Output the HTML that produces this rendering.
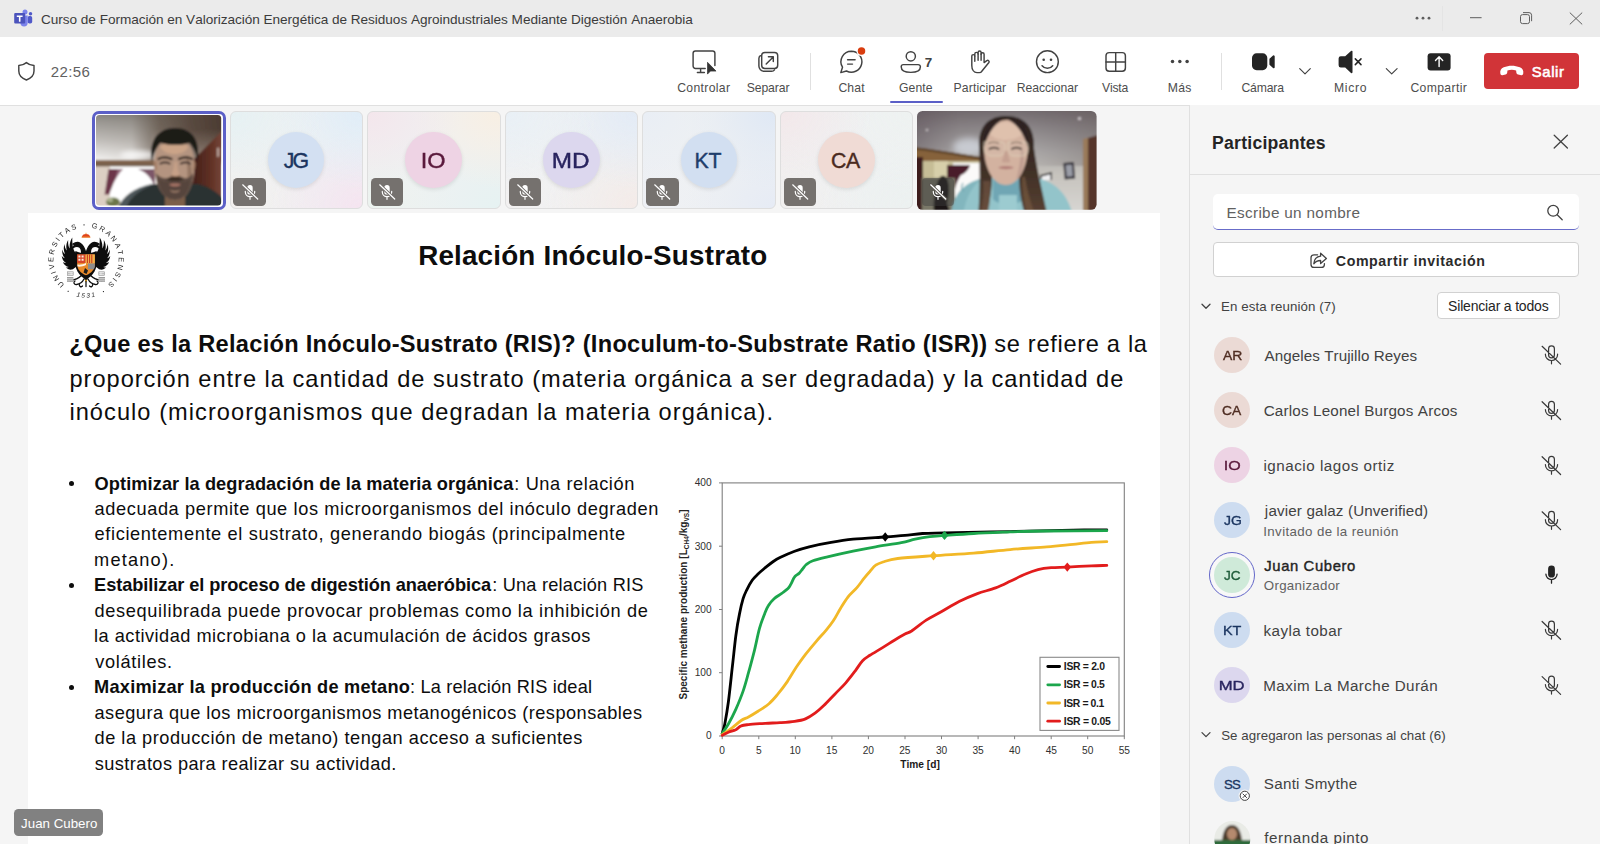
<!DOCTYPE html>
<html lang="es"><head><meta charset="utf-8"><title>Curso de Formación</title><style>
html,body{margin:0;padding:0;}
body{width:1600px;height:844px;overflow:hidden;background:#f5f5f5;position:relative;font-family:"Liberation Sans",sans-serif;font-kerning:none;}
.b{position:absolute;box-sizing:border-box;display:block;}
.t{position:absolute;white-space:pre;line-height:1em;display:block;}
svg{overflow:visible;}
svg text{font-family:"Liberation Sans",sans-serif;}
</style></head><body>
<div class="b" style="left:0px;top:0px;width:1600px;height:37px;background:#ebebeb;"></div>
<div class="b" style="left:0px;top:37px;width:1600px;height:69px;background:#fff;border-bottom:1px solid #e0e0e0;"></div>
<span class="t" style="left:41.01px;top:13.00px;font-size:13.6px;color:#3b3b3b;letter-spacing:-0.032px;">Curso de Formación en Valorización Energética de Residuos Agroindustriales Mediante Digestión Anaerobia</span>
<span class="t" style="left:50.75px;top:64.00px;font-size:15px;color:#616161;letter-spacing:0.369px;">22:56</span>
<span class="t" style="left:677.18px;top:82.00px;font-size:12.2px;color:#4d4d4d;letter-spacing:0.331px;">Controlar</span>
<span class="t" style="left:746.65px;top:82.00px;font-size:12.2px;color:#4d4d4d;letter-spacing:-0.074px;">Separar</span>
<span class="t" style="left:838.38px;top:82.00px;font-size:12.2px;color:#4d4d4d;letter-spacing:0.146px;">Chat</span>
<span class="t" style="left:899.09px;top:82.00px;font-size:12.2px;color:#4d4d4d;letter-spacing:0.055px;">Gente</span>
<span class="t" style="left:953.60px;top:82.00px;font-size:12.2px;color:#4d4d4d;letter-spacing:0.119px;">Participar</span>
<span class="t" style="left:1016.80px;top:82.00px;font-size:12.2px;color:#4d4d4d;letter-spacing:-0.056px;">Reaccionar</span>
<span class="t" style="left:1101.95px;top:82.00px;font-size:12.2px;color:#4d4d4d;letter-spacing:-0.167px;">Vista</span>
<span class="t" style="left:1167.80px;top:82.00px;font-size:12.2px;color:#4d4d4d;letter-spacing:0.297px;">Más</span>
<span class="t" style="left:1241.38px;top:82.00px;font-size:12.2px;color:#4d4d4d;letter-spacing:-0.154px;">Cámara</span>
<span class="t" style="left:1334.00px;top:82.00px;font-size:12.2px;color:#4d4d4d;letter-spacing:0.673px;">Micro</span>
<span class="t" style="left:1410.38px;top:82.00px;font-size:12.2px;color:#4d4d4d;letter-spacing:0.371px;">Compartir</span>
<span class="t" style="left:924.82px;top:56.00px;font-size:13.4px;color:#424242;font-weight:700;">7</span>
<div class="b" style="left:890.4px;top:100.8px;width:52.5px;height:2.4px;background:#5b5fc7;border-radius:1.2px;"></div>
<div class="b" style="left:810px;top:53px;width:1px;height:37px;background:#e0e0e0;"></div>
<div class="b" style="left:1221px;top:53px;width:1px;height:37px;background:#e0e0e0;"></div>
<div class="b" style="left:1442px;top:6px;width:1px;height:25px;background:#e4e4e4;"></div>
<div class="b" style="left:1484px;top:52.5px;width:95px;height:36.5px;background:#d13438;border-radius:4px;"></div>
<span class="t" style="left:1531.83px;top:65.00px;font-size:14.8px;color:#fff;letter-spacing:0.628px;-webkit-text-stroke:0.600px #fff;">Salir</span>
<svg class="b" style="left:0;top:0" width="1600" height="110" viewBox="0 0 1600 110"><g><circle cx="30.500" cy="13.700" r="1.750" fill="#5059c9"/><rect x="27.600" y="16" width="4.600" height="7.600" rx="1.800" fill="#5059c9"/><circle cx="25" cy="12.100" r="2.500" fill="#7b83eb"/><path d="M20.400 15.600h7.300v7.200a3.650 3.650 0 0 1-7.300 0z" fill="#7b83eb"/><rect x="14.200" y="13" width="11" height="10.600" rx="1.100" fill="#4b53bc"/><path d="M16.800 15.600h5.800v1.400h-2.100v4.700h-1.600v-4.700h-2.100z" fill="#fff"/></g><path d="M26.4 62.6c2.2 1.9 4.6 2.7 7.6 2.9v5.6c0 4.4-2.9 7.2-7.6 8.9-4.7-1.7-7.6-4.5-7.6-8.9v-5.6c3-.2 5.4-1 7.6-2.9z" fill="none" stroke="#424242" stroke-width="1.45" stroke-linecap="round" stroke-linejoin="round"/><g fill="#5e5e5e"><circle cx="1417" cy="18.200" r="1.400"/><circle cx="1423" cy="18.200" r="1.400"/><circle cx="1429" cy="18.200" r="1.400"/></g><path d="M1470 17.700h11.600" stroke="#5e5e5e" stroke-width="1" fill="none"/><rect x="1520.500" y="14.600" width="9" height="9" rx="2" fill="none" stroke="#5e5e5e" stroke-width="1"/><path d="M1523 12.600h6a2.600 2.600 0 0 1 2.600 2.600v6" fill="none" stroke="#5e5e5e" stroke-width="1"/><path d="M1569.800 12.600l12.400 11.800M1582.200 12.600l-12.400 11.800" stroke="#5e5e5e" stroke-width="1" fill="none"/><path d="M705.200 68.400H695.400a2.300 2.300 0 0 1-2.300-2.300V53.200a2.300 2.300 0 0 1 2.300-2.300h17.200a2.300 2.300 0 0 1 2.300 2.300v12.400M700.600 68.600v3.800M697.400 72.500h7" fill="none" stroke="#424242" stroke-width="1.45" stroke-linecap="round" stroke-linejoin="round"/><path d="M707.500 62.300v11.800l3-3h5.500z" fill="#333" stroke="#333" stroke-width="0.700" stroke-linejoin="round"/><rect x="761.700" y="52.400" width="16" height="16" rx="3.200" fill="none" stroke="#424242" stroke-width="1.45" stroke-linecap="round" stroke-linejoin="round"/><path d="M760.400 55.700a3.600 3.600 0 0 0-1.500 3v7.400a5.200 5.200 0 0 0 5.200 5.200h7.400a3.600 3.600 0 0 0 3-1.500" fill="none" stroke="#424242" stroke-width="1.45" stroke-linecap="round" stroke-linejoin="round"/><path d="M766.200 64l7-7M768.400 56.700h4.900v4.900" fill="none" stroke="#424242" stroke-width="1.45" stroke-linecap="round" stroke-linejoin="round"/><path d="M851.400 51.200a10.500 10.500 0 1 1-4.900 19.800l-5.700 1.600 1.700-5.400a10.500 10.500 0 0 1 8.900-16z" fill="none" stroke="#424242" stroke-width="1.45" stroke-linecap="round" stroke-linejoin="round"/><path d="M847.600 59.800h7.500M847.600 64.100h4.900" fill="none" stroke="#424242" stroke-width="1.45" stroke-linecap="round" stroke-linejoin="round"/><circle cx="861.500" cy="51.100" r="5" fill="#fff"/><circle cx="861.500" cy="51.100" r="3.750" fill="#d93d0f"/><circle cx="910.8" cy="56.3" r="4.6" fill="none" stroke="#424242" stroke-width="1.45" stroke-linecap="round" stroke-linejoin="round"/><path d="M903.4 64.6h14.8a2.2 2.2 0 0 1 2.2 2.2c0 3.6-3.8 5.6-9.6 5.6s-9.6-2-9.6-5.6a2.2 2.2 0 0 1 2.2-2.2z" fill="none" stroke="#424242" stroke-width="1.45" stroke-linecap="round" stroke-linejoin="round"/><path d="M971.800 65.500V56.100a1.500 1.500 0 0 1 3 0V54a1.650 1.650 0 0 1 3.300 0V52.500a1.500 1.500 0 0 1 3 0V54.200a1.500 1.500 0 0 1 3 0V62.600l2.700-1.900a1.400 1.400 0 0 1 2.100 1.800L981.800 71.300c-.6.900-1.400 1.300-2.400 1.300h-2.400c-3 0-5.200-2.800-5.200-7.100z" fill="none" stroke="#424242" stroke-width="1.45" stroke-linecap="round" stroke-linejoin="round"/><path d="M974.800 56.100V61.200M978.100 54V60.200M981.100 54V60.200" fill="none" stroke="#424242" stroke-width="1.45" stroke-linecap="round" stroke-linejoin="round"/><circle cx="1047.400" cy="61.700" r="10.900" fill="none" stroke="#424242" stroke-width="1.45" stroke-linecap="round" stroke-linejoin="round"/><circle cx="1043.700" cy="59.700" r="1.300" fill="#424242"/><circle cx="1051" cy="59.700" r="1.300" fill="#424242"/><path d="M1042.100 65.700c1.300 1.700 3.100 2.500 5.300 2.500s4-.8 5.300-2.500" fill="none" stroke="#424242" stroke-width="1.45" stroke-linecap="round" stroke-linejoin="round"/><rect x="1106" y="52.6" width="19.4" height="18.600" rx="3.200" fill="none" stroke="#424242" stroke-width="1.45" stroke-linecap="round" stroke-linejoin="round"/><path d="M1115.700 52.600v18.600M1106 61.900h19.400" fill="none" stroke="#424242" stroke-width="1.45" stroke-linecap="round" stroke-linejoin="round"/><g fill="#424242"><circle cx="1172.500" cy="61.600" r="1.750"/><circle cx="1179.800" cy="61.600" r="1.750"/><circle cx="1187.100" cy="61.600" r="1.750"/></g><rect x="1252" y="53.300" width="15.300" height="16.900" rx="4.600" fill="#242424"/><path d="M1270.400 59.300l3.300-3v11l-3.300-3z" fill="#242424" stroke="#242424" stroke-width="2" stroke-linejoin="round"/><path d="M1299.700 68.700l5.300 5.200 5.300-5.200M1386.300 68.700l5.400 5.200 5.400-5.200" fill="none" stroke="#424242" stroke-width="1.150" stroke-linecap="round" stroke-linejoin="round"/><path d="M1352.500 51.600v20.600a.9.900 0 0 1-1.500.7l-5.800-5.400h-4.400a2.200 2.200 0 0 1-2.200-2.200v-6.800a2.200 2.200 0 0 1 2.200-2.200h4.400l5.800-5.400a.9.900 0 0 1 1.500.7z" fill="#242424"/><path d="M1355.300 58.900l5.700 5.700M1361 58.900l-5.700 5.700" stroke="#242424" stroke-width="1.500" stroke-linecap="round" fill="none"/><rect x="1427.600" y="53.200" width="23" height="17.200" rx="3" fill="#242424"/><path d="M1439.100 66.600v-9.400M1435.500 60.400l3.600-3.600 3.600 3.600" fill="none" stroke="#fff" stroke-width="1.400" stroke-linecap="round" stroke-linejoin="round"/><g transform="translate(1512 71.200) scale(1.060 1.180) translate(-1512 -70.600)"><path d="M1501 72.600c-.5-2.400.6-4.300 3.200-5.300 4.800-1.800 10.400-1.800 15.200 0 2.600 1 3.700 2.900 3.200 5.300-.2 1-.9 1.600-1.900 1.400l-3-.5c-.9-.2-1.500-.8-1.600-1.700l-.2-1.700c-2.600-1-5.600-1-8.200 0l-.2 1.700c-.1.900-.7 1.500-1.600 1.700l-3 .5c-1 .2-1.700-.4-1.900-1.400z" fill="#fff"/></g></svg>
<div class="b" style="left:92px;top:111px;width:134px;height:98.8px;background:#fff;border:3px solid #5b5fc7;border-radius:7px;"></div>
<svg class="b" style="left:96.2px;top:115.1px;" width="125.2" height="90.6" viewBox="0 0 125.2 90.6"><defs><clipPath id="c1"><rect x="0" y="0" width="125.200" height="90.600" rx="3.500"/></clipPath>
<linearGradient id="w1" x1="0" y1="0" x2="0" y2="1"><stop offset="0" stop-color="#7c7974"/><stop offset=".12" stop-color="#9c9994"/><stop offset=".3" stop-color="#c2bfbb"/><stop offset=".47" stop-color="#eeedeb"/><stop offset="1" stop-color="#eeedeb"/></linearGradient>
<linearGradient id="w1b" x1="0" y1="0" x2="1" y2="0"><stop offset="0" stop-color="#5e5044" stop-opacity="0"/><stop offset=".3" stop-color="#5e5044" stop-opacity=".1"/><stop offset=".5" stop-color="#5e5044" stop-opacity=".75"/><stop offset=".75" stop-color="#54443a" stop-opacity=".95"/><stop offset="1" stop-color="#4a3a30" stop-opacity="1"/></linearGradient>
<linearGradient id="w1c" x1="0" y1="0" x2="0" y2="1"><stop offset="0" stop-color="#a8988c" stop-opacity="0"/><stop offset="1" stop-color="#b8aaa0" stop-opacity=".75"/></linearGradient>
<linearGradient id="bd1" x1="0" y1="0" x2="0" y2="1"><stop offset="0" stop-color="#8c6e56"/><stop offset="1" stop-color="#6c5543"/></linearGradient>
<linearGradient id="dr1" x1="0" y1="0" x2="1" y2="0"><stop offset="0" stop-color="#43201a"/><stop offset=".6" stop-color="#5f3024"/><stop offset="1" stop-color="#75463a"/></linearGradient>
<filter id="bl1" x="-10%" y="-10%" width="120%" height="120%"><feGaussianBlur stdDeviation="1"/></filter>
<filter id="bl1b" x="-30%" y="-30%" width="160%" height="160%"><feGaussianBlur stdDeviation="2.400"/></filter></defs>
<g clip-path="url(#c1)"><g filter="url(#bl1)">
<rect x="-5" y="-5" width="136" height="101" fill="url(#w1)"/>
<rect x="-5" y="-5" width="136" height="52" fill="url(#w1b)"/>
<rect x="55" y="14" width="76" height="36" fill="url(#w1c)"/>
<ellipse cx="42" cy="40" rx="18" ry="4" fill="#ffffff" opacity=".8" filter="url(#bl1b)"/>
<rect x="-5" y="51" width="70" height="45" fill="#dccfc3"/>
<rect x="14" y="51" width="46" height="36" fill="#ffffff"/>
<rect x="-5" y="45" width="63" height="6.400" fill="url(#bd1)"/>
<path d="M12.600 54h14c-4 4-7 9-9 14l-4.500 11.500h-4.500z" fill="#6c3649"/>
<path d="M22 54h5c-4 4-7 9-9 14z" fill="#93677a"/>
<path d="M42 54h17v20c-2-9-7-16-17-20z" fill="#7b5768"/>
<path d="M96 46L126 16v80H96z" fill="url(#dr1)"/>
<path d="M121 33l2.200-.5v9l-2.200 .5z" fill="#d8ccc4" opacity=".7"/>
<ellipse cx="17" cy="87" rx="7" ry="4.500" fill="#6c7649"/><ellipse cx="14" cy="85" rx="3" ry="2" fill="#a8b08a"/>
<path d="M22 93c5-12 16-20 34-24l46 0c10 2 18 8 25 14v12z" fill="#2a3232"/>
<path d="M22 93c5-12 16-20 34-24l4 0c-16 5-26 13-30 24z" fill="#566064" opacity=".8"/>
<path d="M69 78h20v16h-20z" fill="#7c5e4a"/>
<path d="M58 50c0 14 6 35 21 35s20-21 19.500-36c-1-17-7-27-20-27s-20.500 11-20.500 28z" fill="#b49480"/>
<path d="M64 32c4-4 9-6 14.500-6s10 2 14 6c-3 5-8 7-14 7s-11-2-14.500-7z" fill="#cda588" opacity=".9"/>
<path d="M90 40c4 4 7 14 6 26c-1 6-3 11-6 15c2-12 2-28 0-41z" fill="#8d6f5c" opacity=".8"/>
<path d="M57.500 49c.5 3 1.500 6 3.500 7v-10c-2 0-3.500 1-3.500 3zM99.500 49c0 3-1 6-2.500 7v-10c1.500 0 2.500 1 2.500 3z" fill="#a58068"/>
<path d="M60 58c0 14 7 27 19 27s18-13 18-27c-3 5-7 6-10 4.500-4-2-10-2-14 0-3 1.500-9 1-13-4.500z" fill="#5d4c43"/>
<path d="M63 64c1 11 7 20 16 20s14-9 15-20c-3 3-6 3.500-8 2.500-4-2-10-2-14 0-2 1-6 .5-9-2.500z" fill="#54433b" opacity=".75"/>
<path d="M70.500 64.500c4-3.500 13-3.500 17 0c-2 1.500-15 1.500-17 0z" fill="#33261f"/>
<path d="M73 69.500c3-1.200 9-1.200 12 0-2 2.600-10 2.600-12 0z" fill="#a87466"/>
<path d="M74 75c3 1.500 7 1.500 10 0c-1 3.500-9 3.500-10 0z" fill="#b08c76" opacity=".8"/>
<path d="M56 47c-4-21 6-34 23-34s26 12 22.500 34c-1-9-4-15-8-19c-8 2.500-20 2.500-29 0c-4 4-7 10-8.500 19z" fill="#1d1a19"/>
<path d="M62.500 44c3-2.200 9-2.200 13 0M83 44c4-2.200 10-2.200 13 0" stroke="#2a201c" stroke-width="2.200" fill="none" stroke-linecap="round"/>
<path d="M64.500 48.500c2.500-1.200 6.500-1.200 9 0M85 48.500c2.500-1.200 6.500-1.200 9 0" stroke="#4a3a34" stroke-width="2.200" fill="none" stroke-linecap="round"/>
<path d="M78.500 47c-.5 6-1.500 10-3.500 13.500c2.500 1.500 6.500 1.500 9 0c-2-3.500-3-8-3-13.500z" fill="#c9a288" opacity=".85"/>
<path d="M75 60.500c2.500 1.500 6.500 1.500 9 0" stroke="#7d5c4a" stroke-width="1.200" fill="none"/>
</g></g></svg>
<div class="b" style="left:229.6px;top:111.400px;width:133.400px;height:98px;border-radius:6px;border:1px solid #dedede;background:radial-gradient(ellipse 70% 80% at 0% 0%,#e6f1f3,rgba(255,255,255,0) 100%),radial-gradient(ellipse 70% 80% at 100% 0%,#e0edf8,rgba(255,255,255,0) 100%),radial-gradient(ellipse 70% 80% at 100% 100%,#f5e4f0,rgba(255,255,255,0) 100%),radial-gradient(ellipse 70% 80% at 0% 100%,#f3f0ee,rgba(255,255,255,0) 100%),#eff1f2;"></div>
<div class="b" style="left:267.70px;top:131.500px;width:56.800px;height:56.800px;border-radius:50%;background:#d3e0f2;box-shadow:0 1.500px 4px rgba(0,0,0,.10);"></div>
<span class="t" style="left:283.77px;top:151.00px;font-size:21.3px;color:#1b3560;letter-spacing:-1.894px;-webkit-text-stroke:0.400px #1b3560;">JG</span>
<div class="b" style="left:233.4px;top:178.2px;width:32.4px;height:27.6px;background:#75716e;border-radius:4.500px;"></div>
<svg class="b" style="left:239.6px;top:182.0px;" width="20" height="20" viewBox="-10 -10 20 20"><rect x="-2.700" y="-7" width="5.400" height="9.600" rx="2.700" fill="#fff"/><path d="M-4.700 -.6v.6a4.700 4.700 0 0 0 9.400 0v-.6M0 4.700v2.600" fill="none" stroke="#fff" stroke-width="1.200" stroke-linecap="round"/><path d="M-7.300 -7.200l15 14.200" stroke="#75716e" stroke-width="3.200" stroke-linecap="round"/><path d="M-7.300 -7.200l15 14.200" stroke="#fff" stroke-width="1.200" stroke-linecap="round"/></svg>
<div class="b" style="left:367.2px;top:111.400px;width:133.400px;height:98px;border-radius:6px;border:1px solid #dedede;background:radial-gradient(ellipse 70% 80% at 0% 0%,#f4e6ec,rgba(255,255,255,0) 100%),radial-gradient(ellipse 70% 80% at 100% 0%,#f8efe3,rgba(255,255,255,0) 100%),radial-gradient(ellipse 70% 80% at 100% 100%,#e6f2f2,rgba(255,255,255,0) 100%),radial-gradient(ellipse 70% 80% at 0% 100%,#ecf3ef,rgba(255,255,255,0) 100%),#eff1f2;"></div>
<div class="b" style="left:405.30px;top:131.500px;width:56.800px;height:56.800px;border-radius:50%;background:#eed3e4;box-shadow:0 1.500px 4px rgba(0,0,0,.10);"></div>
<span class="t" style="left:420.68px;top:151.00px;font-size:21.3px;color:#5a1a3c;-webkit-text-stroke:0.400px #5a1a3c;transform:scaleX(1.103);transform-origin:1.97px 50%;">IO</span>
<div class="b" style="left:371.0px;top:178.2px;width:32.4px;height:27.6px;background:#75716e;border-radius:4.500px;"></div>
<svg class="b" style="left:377.2px;top:182.0px;" width="20" height="20" viewBox="-10 -10 20 20"><rect x="-2.700" y="-7" width="5.400" height="9.600" rx="2.700" fill="#fff"/><path d="M-4.700 -.6v.6a4.700 4.700 0 0 0 9.400 0v-.6M0 4.700v2.600" fill="none" stroke="#fff" stroke-width="1.200" stroke-linecap="round"/><path d="M-7.300 -7.200l15 14.200" stroke="#75716e" stroke-width="3.200" stroke-linecap="round"/><path d="M-7.300 -7.200l15 14.200" stroke="#fff" stroke-width="1.200" stroke-linecap="round"/></svg>
<div class="b" style="left:504.8px;top:111.400px;width:133.400px;height:98px;border-radius:6px;border:1px solid #dedede;background:radial-gradient(ellipse 70% 80% at 0% 0%,#e9f0f6,rgba(255,255,255,0) 100%),radial-gradient(ellipse 70% 80% at 100% 0%,#e3ebf6,rgba(255,255,255,0) 100%),radial-gradient(ellipse 70% 80% at 100% 100%,#f4ebe8,rgba(255,255,255,0) 100%),radial-gradient(ellipse 70% 80% at 0% 100%,#f3f1f1,rgba(255,255,255,0) 100%),#eff1f2;"></div>
<div class="b" style="left:542.90px;top:131.500px;width:56.800px;height:56.800px;border-radius:50%;background:#dcd7ee;box-shadow:0 1.500px 4px rgba(0,0,0,.10);"></div>
<span class="t" style="left:551.90px;top:151.00px;font-size:21.3px;color:#29245f;-webkit-text-stroke:0.400px #29245f;transform:scaleX(1.143);transform-origin:1.75px 50%;">MD</span>
<div class="b" style="left:508.6px;top:178.2px;width:32.4px;height:27.6px;background:#75716e;border-radius:4.500px;"></div>
<svg class="b" style="left:514.8000000000001px;top:182.0px;" width="20" height="20" viewBox="-10 -10 20 20"><rect x="-2.700" y="-7" width="5.400" height="9.600" rx="2.700" fill="#fff"/><path d="M-4.700 -.6v.6a4.700 4.700 0 0 0 9.400 0v-.6M0 4.700v2.600" fill="none" stroke="#fff" stroke-width="1.200" stroke-linecap="round"/><path d="M-7.300 -7.200l15 14.200" stroke="#75716e" stroke-width="3.200" stroke-linecap="round"/><path d="M-7.300 -7.200l15 14.200" stroke="#fff" stroke-width="1.200" stroke-linecap="round"/></svg>
<div class="b" style="left:642.4px;top:111.400px;width:133.400px;height:98px;border-radius:6px;border:1px solid #dedede;background:radial-gradient(ellipse 70% 80% at 0% 0%,#e9eef5,rgba(255,255,255,0) 100%),radial-gradient(ellipse 70% 80% at 100% 0%,#dfe8f5,rgba(255,255,255,0) 100%),radial-gradient(ellipse 70% 80% at 100% 100%,#e6ebf5,rgba(255,255,255,0) 100%),radial-gradient(ellipse 70% 80% at 0% 100%,#eef0f5,rgba(255,255,255,0) 100%),#eff1f2;"></div>
<div class="b" style="left:680.50px;top:131.500px;width:56.800px;height:56.800px;border-radius:50%;background:#d2dff1;box-shadow:0 1.500px 4px rgba(0,0,0,.10);"></div>
<span class="t" style="left:694.45px;top:151.00px;font-size:21.3px;color:#1e3d6b;letter-spacing:-0.182px;-webkit-text-stroke:0.400px #1e3d6b;">KT</span>
<div class="b" style="left:646.1999999999999px;top:178.2px;width:32.4px;height:27.6px;background:#75716e;border-radius:4.500px;"></div>
<svg class="b" style="left:652.4px;top:182.0px;" width="20" height="20" viewBox="-10 -10 20 20"><rect x="-2.700" y="-7" width="5.400" height="9.600" rx="2.700" fill="#fff"/><path d="M-4.700 -.6v.6a4.700 4.700 0 0 0 9.400 0v-.6M0 4.700v2.600" fill="none" stroke="#fff" stroke-width="1.200" stroke-linecap="round"/><path d="M-7.300 -7.200l15 14.200" stroke="#75716e" stroke-width="3.200" stroke-linecap="round"/><path d="M-7.300 -7.200l15 14.200" stroke="#fff" stroke-width="1.200" stroke-linecap="round"/></svg>
<div class="b" style="left:780.0px;top:111.400px;width:133.400px;height:98px;border-radius:6px;border:1px solid #dedede;background:radial-gradient(ellipse 70% 80% at 0% 0%,#f3e8ea,rgba(255,255,255,0) 100%),radial-gradient(ellipse 70% 80% at 100% 0%,#eef2f1,rgba(255,255,255,0) 100%),radial-gradient(ellipse 70% 80% at 100% 100%,#ecf1f0,rgba(255,255,255,0) 100%),radial-gradient(ellipse 70% 80% at 0% 100%,#f1efee,rgba(255,255,255,0) 100%),#eff1f2;"></div>
<div class="b" style="left:818.10px;top:131.500px;width:56.800px;height:56.800px;border-radius:50%;background:#f0dbd5;box-shadow:0 1.500px 4px rgba(0,0,0,.10);"></div>
<span class="t" style="left:831.12px;top:151.00px;font-size:21.3px;color:#4a2a20;letter-spacing:-0.466px;-webkit-text-stroke:0.400px #4a2a20;">CA</span>
<div class="b" style="left:783.8px;top:178.2px;width:32.4px;height:27.6px;background:#75716e;border-radius:4.500px;"></div>
<svg class="b" style="left:790.0px;top:182.0px;" width="20" height="20" viewBox="-10 -10 20 20"><rect x="-2.700" y="-7" width="5.400" height="9.600" rx="2.700" fill="#fff"/><path d="M-4.700 -.6v.6a4.700 4.700 0 0 0 9.400 0v-.6M0 4.700v2.600" fill="none" stroke="#fff" stroke-width="1.200" stroke-linecap="round"/><path d="M-7.300 -7.200l15 14.200" stroke="#75716e" stroke-width="3.200" stroke-linecap="round"/><path d="M-7.300 -7.200l15 14.200" stroke="#fff" stroke-width="1.200" stroke-linecap="round"/></svg>
<svg class="b" style="left:917.3px;top:110.9px;" width="179.6" height="98.8" viewBox="0 0 179.6 98.8"><defs><clipPath id="c2"><rect x="0" y="0" width="179.600" height="98.800" rx="5.500"/></clipPath>
<linearGradient id="w2" x1="0" y1="0" x2="0" y2="1"><stop offset="0" stop-color="#6c6468"/><stop offset=".2" stop-color="#8d888a"/><stop offset=".42" stop-color="#aeacab"/><stop offset=".62" stop-color="#c6c3bd"/><stop offset="1" stop-color="#d9d8d5"/></linearGradient>
<linearGradient id="w2b" x1="0" y1="0" x2="1" y2="0"><stop offset="0" stop-color="#5c5058" stop-opacity=".55"/><stop offset=".25" stop-color="#5c5058" stop-opacity=".1"/><stop offset=".55" stop-color="#5c5058" stop-opacity="0"/><stop offset="1" stop-color="#5a4e4c" stop-opacity=".35"/></linearGradient>
<linearGradient id="h2" x1="0" y1="0" x2="0" y2="1"><stop offset="0" stop-color="#2c221f"/><stop offset=".5" stop-color="#3e2e26"/><stop offset="1" stop-color="#5a4333"/></linearGradient>
<filter id="bl2" x="-10%" y="-10%" width="120%" height="120%"><feGaussianBlur stdDeviation="1"/></filter>
<filter id="bl2b" x="-30%" y="-30%" width="160%" height="160%"><feGaussianBlur stdDeviation="3"/></filter></defs>
<g clip-path="url(#c2)"><g filter="url(#bl2)">
<rect x="-5" y="-5" width="190" height="110" fill="url(#w2)"/>
<rect x="-5" y="-5" width="190" height="60" fill="url(#w2b)"/>
<ellipse cx="52" cy="36" rx="16" ry="9" fill="#d2d6de" opacity=".8" filter="url(#bl2b)"/>
<path d="M166 28l6-1.500v80h-6z" fill="#9a7a5a"/>
<path d="M171 27l14-4v84h-14z" fill="#54362a"/>
<circle cx="162.500" cy="7.500" r="1.600" fill="#cfc8cc"/><circle cx="10" cy="19" r="1.300" fill="#bdb6ba"/>
<rect x="147" y="51.500" width="10.500" height="16.500" fill="#34313a" transform="rotate(-5 152 60)"/><rect x="149.200" y="54" width="6.200" height="11.500" fill="#9a9ca6" transform="rotate(-5 152 60)"/>
<path d="M123 64l12-3v8h-12z" fill="#2c2a2c"/><path d="M124.500 65.500l9-2.200v5.700h-9z" fill="#f2f2f4"/>
<path d="M-5 36c20 2 44 6 68 10v8H-5z" fill="#86623a"/>
<path d="M-5 36c20 2 44 6 68 10v2.500c-24-4-48-8-68-10z" fill="#5e452c"/>
<rect x="-5" y="50" width="72" height="55" fill="#c6bd96"/>
<rect x="17" y="50" width="14" height="20" fill="#d7cfaa"/>
<rect x="-5" y="46" width="11" height="62" fill="#3e1f1b"/>
<rect x="36" y="52" width="30" height="50" fill="#fbfaf9"/>
<path d="M30 54h23c-1 4-4 8-9 10c-3 4-5 9-6 14l-8 3z" fill="#4a1d2b"/>
<rect x="5" y="67" width="33" height="40" fill="#7a7867"/>
<path d="M17 104c-1-12 0-28 6-38c4-3 7 0 8 4c2 8 1 16-1 22l4 12z" fill="#1a1517"/>
<path d="M34 105c2-20 10-32 32-38l46-2c24 4 38 15 44 40z" fill="#93c4ca"/>
<path d="M34 105c2-20 10-32 32-38c-12 8-18 22-20 38z" fill="#82b6be"/>
<path d="M46 72c-2 4-2 7 1 8" stroke="#6fa2ac" stroke-width="1.200" fill="none"/>
<path d="M76 60h30v28c-5 7-25 7-30 0z" fill="#6fa6b4"/>
<path d="M82 84h18v22h-18z" fill="#9ccbd0"/>
<path d="M62 36c-1-20 9-31 27-31s29 11 28 32c3 22 9 46 14 70h-22c-4-12-7-26-7-42h-27c0 16-3 30-7 42H61c2-24 2-48 1-71z" fill="url(#h2)"/>
<path d="M66 70c1 12 0 24-3 36h7c3-10 4-22 3-36z" fill="#6d5240" opacity=".7"/>
<path d="M108 66c2 14 6 27 11 40h-8c-4-12-6-26-6-40z" fill="#75583f" opacity=".7"/>
<path d="M67 37c0-17 9-28 22-28s23 11 22 29c-1 16-8 36-22 36s-22-19-22-37z" fill="#d3b2a0"/>
<path d="M72 22c4-7 10-11 17-11s13 4 17 11c-4 5-10 7-17 7s-13-2-17-7z" fill="#e0c2ae" opacity=".9"/>
<path d="M104 34c3 6 4 14 2 22c-1 5-4 10-7 13c3-10 5-22 5-35z" fill="#b8968a" opacity=".7"/>
<path d="M89 7.500c-9 3-17 11-22.500 30c-2-16 6-31 22.500-31.500z" fill="#2e2420"/>
<path d="M88 7.500c9 3 18 11 23.500 31c2-17-7-32-23.500-32.500z" fill="#2e2420"/>
<path d="M67 31h18c2 0 3 1.500 3 3.500v4c0 4-3 6.500-8 6.500h-5c-5 0-8-4-8-9zM91 31h17c2 0 3 1.500 3 4.500v3c0 4-3 6.500-7 6.500h-6c-5 0-7-3-7-7z" fill="#dfe8e0" fill-opacity=".1" stroke="#e2d6be" stroke-width=".9" stroke-opacity=".85"/>
<path d="M72.500 38c2-1.500 7-1.500 9 0M95 38c2-1.500 7-1.500 9 0" stroke="#54463f" stroke-width="2" fill="none" stroke-linecap="round"/>
<path d="M71 32.500c3-1.500 8-1.500 11 0M94 32.500c3-1.500 8-1.500 11 0" stroke="#7d6355" stroke-width="1.100" fill="none"/>
<path d="M87.500 40c-.5 5-1.500 8-3 10.500c2 1.500 7 1.500 9 0c-1.500-2.500-2.500-5.500-2.500-10.500z" fill="#c09a8c" opacity=".75"/>
<path d="M81 56.500c4-1.800 12-1.800 16 0c-3 2.200-13 2.200-16 0z" fill="#b07c76"/>
</g></g></svg>
<div class="b" style="left:922px;top:178.3px;width:32px;height:27.4px;background:rgba(60,60,60,.45);border-radius:4px;"></div>
<svg class="b" style="left:928px;top:181.70000000000002px;" width="20" height="20" viewBox="-10 -10 20 20"><rect x="-2.700" y="-7" width="5.400" height="9.600" rx="2.700" fill="#fff"/><path d="M-4.700 -.6v.6a4.700 4.700 0 0 0 9.400 0v-.6M0 4.700v2.600" fill="none" stroke="#fff" stroke-width="1.200" stroke-linecap="round"/><path d="M-7.300 -7.200l15 14.200" stroke="#5a5650" stroke-width="3.200" stroke-linecap="round"/><path d="M-7.300 -7.200l15 14.200" stroke="#fff" stroke-width="1.200" stroke-linecap="round"/></svg>
<div class="b" style="left:28px;top:213px;width:1132px;height:631px;background:#fff;"></div>
<span class="t" style="left:418.14px;top:242.00px;font-size:27.8px;color:#0d0d0d;font-weight:700;letter-spacing:0.196px;">Relación Inóculo-Sustrato</span>
<span class="t" style="left:69.19px;top:333.00px;font-size:23.6px;color:#0d0d0d;font-weight:700;letter-spacing:0.290px;">¿Que es la Relación Inóculo-Sustrato (RIS)? (Inoculum-to-Substrate Ratio (ISR))</span>
<span class="t" style="left:994.34px;top:333.00px;font-size:23.6px;color:#0d0d0d;letter-spacing:0.691px;">se refiere a la</span>
<span class="t" style="left:69.48px;top:368.00px;font-size:23.6px;color:#0d0d0d;letter-spacing:0.987px;">proporción entre la cantidad de sustrato (materia orgánica a ser degradada) y la cantidad de</span>
<span class="t" style="left:69.42px;top:401.00px;font-size:23.6px;color:#0d0d0d;letter-spacing:1.051px;">inóculo (microorganismos que degradan la materia orgánica).</span>
<span class="t" style="left:94.55px;top:475.00px;font-size:18.2px;color:#0d0d0d;font-weight:700;letter-spacing:0.094px;">Optimizar la degradación de la materia orgánica</span>
<span class="t" style="left:514.34px;top:475.00px;font-size:18.2px;color:#0d0d0d;letter-spacing:0.596px;">: Una relación</span>
<span class="t" style="left:94.53px;top:500.00px;font-size:18.2px;color:#0d0d0d;letter-spacing:0.617px;">adecuada permite que los microorganismos del inóculo degraden</span>
<span class="t" style="left:94.53px;top:525.00px;font-size:18.2px;color:#0d0d0d;letter-spacing:0.647px;">eficientemente el sustrato, generando biogás (principalmente</span>
<span class="t" style="left:94.09px;top:551.00px;font-size:18.2px;color:#0d0d0d;letter-spacing:1.193px;">metano).</span>
<span class="t" style="left:94.08px;top:576.00px;font-size:18.2px;color:#0d0d0d;font-weight:700;letter-spacing:-0.072px;">Estabilizar el proceso de digestión anaeróbica</span>
<span class="t" style="left:492.14px;top:576.00px;font-size:18.2px;color:#0d0d0d;letter-spacing:0.218px;">: Una relación RIS</span>
<span class="t" style="left:94.54px;top:602.00px;font-size:18.2px;color:#0d0d0d;letter-spacing:0.645px;">desequilibrada puede provocar problemas como la inhibición de</span>
<span class="t" style="left:94.07px;top:627.00px;font-size:18.2px;color:#0d0d0d;letter-spacing:0.487px;">la actividad microbiana o la acumulación de ácidos grasos</span>
<span class="t" style="left:95.24px;top:653.00px;font-size:18.2px;color:#0d0d0d;letter-spacing:0.668px;">volátiles.</span>
<span class="t" style="left:94.08px;top:678.00px;font-size:18.2px;color:#0d0d0d;font-weight:700;letter-spacing:0.237px;">Maximizar la producción de metano</span>
<span class="t" style="left:410.04px;top:678.00px;font-size:18.2px;color:#0d0d0d;letter-spacing:0.183px;">: La relación RIS ideal</span>
<span class="t" style="left:94.53px;top:704.00px;font-size:18.2px;color:#0d0d0d;letter-spacing:0.463px;">asegura que los microorganismos metanogénicos (responsables</span>
<span class="t" style="left:94.54px;top:729.00px;font-size:18.2px;color:#0d0d0d;letter-spacing:0.514px;">de la producción de metano) tengan acceso a suficientes</span>
<span class="t" style="left:94.79px;top:755.00px;font-size:18.2px;color:#0d0d0d;letter-spacing:0.428px;">sustratos para realizar su actividad.</span>
<div class="b" style="left:69.0px;top:481.0px;width:5.4px;height:5.4px;background:#0d0d0d;border-radius:50%;"></div>
<div class="b" style="left:69.0px;top:582.8px;width:5.4px;height:5.4px;background:#0d0d0d;border-radius:50%;"></div>
<div class="b" style="left:69.0px;top:684.5999999999999px;width:5.4px;height:5.4px;background:#0d0d0d;border-radius:50%;"></div>
<div class="b" style="left:14px;top:809.2px;width:89.4px;height:27.2px;background:#818181;border-radius:4.500px;"></div>
<span class="t" style="left:21.09px;top:817.00px;font-size:13.3px;color:#fff;letter-spacing:0.011px;">Juan Cubero</span>
<svg class="b" style="left:0px;top:0px;" width="1600" height="844" viewBox="0 0 1600 844"><rect x="722.2" y="482.9" width="402.1" height="253.1" fill="#fff" stroke="#7f7f7f" stroke-width="1.100"/><path d="M719.0 736.0H722.2M719.0 672.7H722.2M719.0 609.5H722.2M719.0 546.2H722.2M719.0 482.9H722.2M722.2 736.0v3.200M758.8 736.0v3.200M795.3 736.0v3.200M831.9 736.0v3.200M868.4 736.0v3.200M905.0 736.0v3.200M941.5 736.0v3.200M978.1 736.0v3.200M1014.6 736.0v3.200M1051.2 736.0v3.200M1087.7 736.0v3.200M1124.3 736.0v3.200" stroke="#7f7f7f" stroke-width="1" fill="none"/><path d="M722.2 733.5C722.6 731.9 723.7 729.3 724.8 724.0C725.8 718.7 727.2 711.0 728.4 701.8C729.6 692.7 730.9 679.9 732.1 668.9C733.4 658.0 734.6 645.2 735.8 636.0C737.0 626.9 738.2 620.1 739.5 613.9C740.7 607.7 741.9 602.7 743.1 598.7C744.3 594.7 745.3 592.9 746.8 589.8C748.3 586.8 750.3 583.0 752.2 580.3C754.0 577.7 755.8 576.1 758.0 574.0C760.2 571.9 762.9 569.7 765.3 567.7C767.8 565.7 770.2 563.7 772.6 562.0C775.1 560.3 776.3 559.4 780.0 557.6C783.6 555.8 789.7 553.0 794.6 551.2C799.5 549.4 803.1 548.3 809.2 546.8C815.3 545.3 823.8 543.6 831.1 542.4C838.4 541.1 844.2 540.1 853.1 539.2C862.0 538.3 875.9 537.6 884.5 537.0C893.2 536.4 898.6 536.0 905.0 535.4C911.3 534.8 915.9 533.9 922.5 533.5C929.1 533.1 929.8 533.2 944.5 532.9C959.1 532.6 987.0 532.1 1010.2 531.6C1033.5 531.1 1068.0 530.3 1084.1 530.0C1100.2 529.8 1103.0 530.0 1106.8 530.0" fill="none" stroke="#000000" stroke-width="2.800" stroke-linejoin="round" stroke-linecap="round"/><path d="M885.2 532.3l3.800 4.700-3.800 4.700-3.800-4.700z" fill="#000000"/><path d="M722.2 733.5C723.2 731.9 726.1 728.0 728.4 724.0C730.7 720.0 733.3 714.9 735.8 709.4C738.2 703.9 741.0 697.2 743.1 691.1C745.2 685.0 746.6 679.5 748.5 672.7C750.4 666.0 752.5 658.0 754.4 650.6C756.2 643.2 757.8 634.5 759.5 628.4C761.2 622.3 763.1 617.7 764.6 613.9C766.1 610.1 766.7 608.2 768.3 605.7C769.8 603.1 771.9 600.7 774.1 598.7C776.3 596.7 779.1 595.3 781.4 593.6C783.7 591.9 786.4 590.2 788.0 588.6C789.6 587.0 789.8 586.1 790.9 584.1C792.0 582.2 793.2 578.7 794.6 576.9C795.9 575.1 797.6 574.7 799.0 573.4C800.3 572.1 801.4 570.4 802.6 569.0C803.8 567.5 804.6 565.9 806.3 564.5C808.0 563.2 809.3 562.0 812.9 560.7C816.4 559.5 820.8 558.5 827.5 556.9C834.2 555.3 845.0 552.9 853.1 551.2C861.1 549.5 867.7 548.2 875.7 546.8C883.8 545.4 894.7 544.0 901.3 542.7C907.9 541.4 910.5 540.2 915.2 539.2C920.0 538.2 925.0 537.3 929.8 536.7C934.7 536.1 937.1 535.9 944.5 535.4C951.8 534.9 962.7 534.1 973.7 533.5C984.7 532.9 998.1 532.4 1010.2 531.9C1022.4 531.5 1030.7 531.2 1046.8 531.0C1062.9 530.8 1096.8 530.7 1106.8 530.7" fill="none" stroke="#1ca64c" stroke-width="2.800" stroke-linejoin="round" stroke-linecap="round"/><path d="M944.5 530.7l3.800 4.700-3.800 4.700-3.800-4.700z" fill="#1ca64c"/><path d="M722.2 734.7C723.9 733.6 729.0 730.1 732.1 727.8C735.3 725.4 738.5 722.3 741.2 720.5C743.9 718.7 745.7 718.5 748.5 717.0C751.3 715.5 754.6 713.5 758.0 711.3C761.4 709.1 765.7 706.6 769.0 703.7C772.3 700.9 774.7 697.9 777.8 694.2C780.8 690.5 784.2 686.1 787.3 681.6C790.4 677.0 793.4 671.6 796.4 667.0C799.5 662.5 802.2 658.7 805.5 654.4C808.9 650.1 813.1 645.1 816.5 641.1C819.9 637.1 823.2 633.7 826.0 630.3C828.8 627.0 830.9 624.5 833.3 620.8C835.8 617.1 838.2 612.1 840.6 608.2C843.1 604.2 845.3 600.5 847.9 597.1C850.6 593.7 854.0 591.0 856.7 587.9C859.4 584.8 861.8 581.2 864.0 578.4C866.2 575.7 867.9 573.7 869.9 571.5C871.8 569.3 873.5 566.7 875.7 565.2C877.9 563.6 879.4 563.1 883.0 562.0C886.7 560.9 889.3 559.6 897.7 558.5C906.1 557.5 920.8 556.6 933.5 555.7C946.2 554.8 960.9 554.1 973.7 553.1C986.5 552.1 998.1 550.6 1010.2 549.6C1022.4 548.5 1036.3 547.7 1046.8 546.8C1057.3 545.9 1065.7 545.0 1073.1 544.3C1080.6 543.5 1085.8 542.8 1091.4 542.4C1097.0 542.0 1104.2 541.9 1106.8 541.7" fill="none" stroke="#f2b827" stroke-width="2.800" stroke-linejoin="round" stroke-linecap="round"/><path d="M933.5 551.0l3.800 4.700-3.800 4.700-3.800-4.700z" fill="#f2b827"/><path d="M722.2 735.4C723.2 734.8 726.1 733.2 728.4 732.2C730.7 731.3 733.7 730.7 735.8 729.7C737.9 728.6 739.1 726.7 741.2 725.9C743.3 725.0 744.5 725.0 748.5 724.6C752.5 724.2 760.1 723.7 765.3 723.3C770.6 723.0 775.1 723.0 780.0 722.7C784.8 722.4 790.3 722.1 794.6 721.4C798.8 720.8 802.1 720.3 805.5 718.9C809.0 717.5 812.0 715.4 815.0 713.2C818.1 711.0 820.5 708.8 823.8 705.6C827.1 702.5 831.1 698.0 834.8 694.2C838.4 690.4 842.3 686.8 845.8 682.8C849.2 678.9 852.5 674.5 855.3 670.8C858.1 667.1 860.1 663.3 862.6 660.7C865.0 658.1 866.5 657.5 869.9 655.3C873.3 653.1 879.0 649.9 883.0 647.4C887.1 644.9 890.4 642.7 894.0 640.5C897.7 638.2 902.0 635.7 905.0 634.1C907.9 632.5 908.0 633.3 911.6 631.0C915.1 628.6 921.3 623.4 926.2 620.2C931.0 617.0 935.3 615.1 940.8 612.0C946.3 608.9 953.0 604.6 959.1 601.5C965.2 598.5 971.3 595.9 977.4 593.6C983.4 591.4 990.1 590.0 995.6 587.9C1001.1 585.9 1005.4 583.6 1010.2 581.3C1015.1 579.0 1020.2 576.2 1024.9 574.3C1029.5 572.3 1033.6 570.7 1038.0 569.6C1042.4 568.5 1046.3 568.1 1051.2 567.7C1056.1 567.3 1060.6 567.4 1067.3 567.1C1074.0 566.7 1084.8 566.1 1091.4 565.8C1098.0 565.5 1104.2 565.5 1106.8 565.4" fill="none" stroke="#e21c1c" stroke-width="2.800" stroke-linejoin="round" stroke-linecap="round"/><path d="M1067.3 562.4l3.800 4.700-3.800 4.700-3.800-4.700z" fill="#e21c1c"/><rect x="1040" y="657.300" width="79" height="73.100" fill="#fff" stroke="#8a8a8a" stroke-width="1.100"/><path d="M1047.800 666.5H1059.600" stroke="#000000" stroke-width="2.800" stroke-linecap="round"/><path d="M1047.800 684.8H1059.600" stroke="#1ca64c" stroke-width="2.800" stroke-linecap="round"/><path d="M1047.800 703.0H1059.600" stroke="#f2b827" stroke-width="2.800" stroke-linecap="round"/><path d="M1047.800 721.2H1059.600" stroke="#e21c1c" stroke-width="2.800" stroke-linecap="round"/></svg>
<span class="t" style="left:1063.80px;top:662.00px;font-size:10.4px;color:#1a1a1a;font-weight:700;letter-spacing:-0.303px;">ISR = 2.0</span>
<span class="t" style="left:1063.80px;top:680.00px;font-size:10.4px;color:#1a1a1a;font-weight:700;letter-spacing:-0.320px;">ISR = 0.5</span>
<span class="t" style="left:1063.80px;top:699.00px;font-size:10.4px;color:#1a1a1a;font-weight:700;letter-spacing:-0.395px;">ISR = 0.1</span>
<span class="t" style="left:1063.80px;top:717.00px;font-size:10.4px;color:#1a1a1a;font-weight:700;letter-spacing:-0.272px;">ISR = 0.05</span>
<span class="t" style="left:705.93px;top:731.00px;font-size:10.2px;color:#303030;">0</span>
<span class="t" style="left:694.78px;top:668.00px;font-size:10.2px;color:#303030;letter-spacing:-0.100px;">100</span>
<span class="t" style="left:694.78px;top:605.00px;font-size:10.2px;color:#303030;letter-spacing:-0.100px;">200</span>
<span class="t" style="left:694.78px;top:542.00px;font-size:10.2px;color:#303030;letter-spacing:-0.100px;">300</span>
<span class="t" style="left:694.78px;top:478.00px;font-size:10.2px;color:#303030;letter-spacing:-0.100px;">400</span>
<span class="t" style="left:719.36px;top:746.00px;font-size:10.2px;color:#303030;">0</span>
<span class="t" style="left:755.93px;top:746.00px;font-size:10.2px;color:#303030;">5</span>
<span class="t" style="left:789.50px;top:746.00px;font-size:10.2px;color:#303030;letter-spacing:-0.100px;">10</span>
<span class="t" style="left:826.07px;top:746.00px;font-size:10.2px;color:#303030;letter-spacing:-0.100px;">15</span>
<span class="t" style="left:862.74px;top:746.00px;font-size:10.2px;color:#303030;letter-spacing:-0.100px;">20</span>
<span class="t" style="left:899.31px;top:746.00px;font-size:10.2px;color:#303030;letter-spacing:-0.100px;">25</span>
<span class="t" style="left:935.91px;top:746.00px;font-size:10.2px;color:#303030;letter-spacing:-0.100px;">30</span>
<span class="t" style="left:972.48px;top:746.00px;font-size:10.2px;color:#303030;letter-spacing:-0.100px;">35</span>
<span class="t" style="left:1009.10px;top:746.00px;font-size:10.2px;color:#303030;letter-spacing:-0.100px;">40</span>
<span class="t" style="left:1045.67px;top:746.00px;font-size:10.2px;color:#303030;letter-spacing:-0.100px;">45</span>
<span class="t" style="left:1082.12px;top:746.00px;font-size:10.2px;color:#303030;letter-spacing:-0.100px;">50</span>
<span class="t" style="left:1118.69px;top:746.00px;font-size:10.2px;color:#303030;letter-spacing:-0.100px;">55</span>
<span class="t" style="left:900.19px;top:760.00px;font-size:10.2px;color:#1a1a1a;font-weight:700;">Time [d]</span>
<div class="b" style="left:684px;top:604.500px;width:0;height:0;"><span class="t" style="left:-100px;top:-5.600px;width:200px;text-align:center;font-size:10px;font-weight:700;color:#262626;transform:rotate(-90deg);transform-origin:50% 50%;letter-spacing:0.030px;">Specific methane production [L<span style="font-size:6.500px;position:relative;top:1.800px;">CH4</span>/kg<span style="font-size:6.500px;position:relative;top:1.800px;">VS</span>]</span></div>
<svg class="b" style="left:41.2px;top:215.3px;" width="90" height="90" viewBox="-45 -45 90 90"><defs><path id="arcT" d="M-21.39 24.60A32.6 32.6 0 1 1 21.39 24.60"/><path id="arcB" d="M-26.59 26.59A37.6 37.6 0 0 0 26.59 26.59"/><filter id="blL" x="-10%" y="-10%" width="120%" height="120%"><feGaussianBlur stdDeviation="0.350"/></filter></defs><g filter="url(#blL)"><text font-size="7.2" fill="#222" letter-spacing="2.173" style="font-kerning:none"><textPath href="#arcT" startOffset="0">UNIVERSITAS <tspan font-size="4.800" dy="-1">•</tspan><tspan dy="1"> GRANATENSIS</tspan></textPath></text><text font-size="6.400" fill="#222" letter-spacing="1.700" font-style="italic" xml:space="preserve" text-anchor="middle"><textPath href="#arcB" startOffset="51%"><tspan font-size="4.500" font-style="normal">•</tspan>  1531  <tspan font-size="4.500" font-style="normal">•</tspan></textPath></text><path d="M-9 -6c-4-2-6-8-5.500-16.500c-2.500 3-3.500 7-3 11c-1.500-2-2.200-5-1.800-8.500c-2.200 3-2.800 7-1.700 10.500c-1.500-1.500-2.500-4-2.500-6.500c-1.500 3.500-1.200 7 .5 10c-1.500-1-2.600-2.500-3.200-4.500c-.5 3.500 .8 6.500 3 8.800c-1.400-.4-2.600-1.200-3.600-2.400c.4 3.200 2.200 5.600 5 7.200c-1.300 0-2.500-.4-3.600-1.100c1.200 2.800 3.600 4.500 6.800 5.100c-1.100 .4-2.300 .5-3.500 .2c2.200 2.200 5 2.900 8.300 2l4.800-3.300z" fill="#0e0e0e" transform="translate(-1.200 0) scale(.86 1)"/><path d="M-9 -6c-4-2-6-8-5.500-16.500c-2.500 3-3.500 7-3 11c-1.500-2-2.200-5-1.800-8.500c-2.200 3-2.800 7-1.700 10.500c-1.500-1.500-2.500-4-2.500-6.500c-1.500 3.500-1.200 7 .5 10c-1.500-1-2.600-2.500-3.200-4.500c-.5 3.500 .8 6.500 3 8.800c-1.400-.4-2.600-1.200-3.600-2.400c.4 3.200 2.200 5.600 5 7.200c-1.300 0-2.500-.4-3.600-1.100c1.200 2.800 3.600 4.500 6.800 5.100c-1.100 .4-2.300 .5-3.500 .2c2.200 2.200 5 2.900 8.300 2l4.800-3.300z" fill="#0e0e0e" transform="translate(1.200 0) scale(-.86 1)"/><path d="M0 -6c-1-5-2.500-8.500-5.500-10.500c-2.200-1.500-5-1.200-7.600 .6l2.600 .5c-1.300 .8-2.200 1.900-2.500 3.200c1.700-1.300 3.600-1.800 5.400-1.300c2.400 .7 3.300 3 3.200 6.300c0 3 .8 5.400 2.400 7.200z" fill="#0e0e0e" stroke="#0e0e0e" stroke-width="1.300" stroke-linejoin="round"/><path d="M0 -6c-1-5-2.500-8.500-5.500-10.500c-2.200-1.500-5-1.200-7.600 .6l2.600 .5c-1.300 .8-2.200 1.900-2.500 3.200c1.700-1.300 3.600-1.800 5.400-1.300c2.400 .7 3.300 3 3.200 6.300c0 3 .8 5.400 2.400 7.200z" fill="#0e0e0e" stroke="#0e0e0e" stroke-width="1.300" stroke-linejoin="round" transform="scale(-1 1)"/><path d="M-10.500 -9c3 1.500 7 2.300 10.500 2.300s7.500-.8 10.500-2.300c2 6 1.500 14-2 20.500c-2 3.600-5 6.300-8.500 7.800c-3.500-1.500-6.500-4.200-8.500-7.800c-3.500-6.500-4-14.500-2-20.500z" fill="#0e0e0e"/><path d="M-4 15c-3 3-7 5-12 5.500M4 15c3 3 7 5 12 5.500M-2 19c-1.500 3-4 5-7.500 5.500c-2.500 .3-3.500-2.500-1.500-3.500M2 19c1.500 3 4 5 7.500 5.500c2.500 .3 3.500-2.500 1.500-3.500M0 19v7.500M-3.500 26c-1.500 1.500-3.500 .5-3-1.200M3.500 26c1.500 1.500 3.500 .5 3-1.200" fill="none" stroke="#0e0e0e" stroke-width="1.300" stroke-linecap="round"/><path d="M-2.200 17.500l2.200 5 2.200-5z" fill="#0e0e0e"/><circle cx="0" cy="20.600" r="1" fill="#d8a020"/><path d="M-8.800 -5.600h17.600v9.500c0 5.500-3.200 9-8.800 11.300c-5.600-2.300-8.800-5.800-8.800-11.300z" fill="#e98a2c"/><path d="M-8.800 -5.600h8.400v8.600h-8.400z" fill="#d8452a"/><path d="M-.4 -5.600h9.200v9h-9.200z" fill="#f2b04a"/><path d="M-7.600 -4.400h2v2h-2zM-4.400 -4.400h2v2h-2zM-7.600 -1.200h2v2h-2zM-4.400 -1.200h2v2h-2z" fill="#fbe9d8"/><path d="M1.400 -5.600v8.600M3.600 -5.600v8.600M5.800 -5.600v8.600" stroke="#c8321e" stroke-width="1"/><path d="M2 3.600h6.800v2.800c-.2 1.200-.5 2-1 2.800h-5.800z" fill="#8d8d8d"/><path d="M-8.700 4.600c3 .5 6 -.3 8.700-1.600v2c-2.700 1.300-5.700 2-8.400 1.600z" fill="#fff3e6"/><path d="M-1 8l3 2.500-1.500 3.500-3-1.500z" fill="#1a1a1a"/><path d="M-4.300 -22.600c.3-2.300 2-3.400 4.300-3.400s4 1.100 4.300 3.400z" fill="#e0431f"/><path d="M-4.300 -22.900h8.600" stroke="#f0902a" stroke-width=".9"/><path d="M0 -27.200v1.600" stroke="#f0902a" stroke-width=".8"/><g transform="scale(-1 1)"><rect x="12.800" y="11.800" width="5.800" height="3.600" fill="none" stroke="#8a8a8a" stroke-width=".6"/><path d="M13.800 12.600v2M15.200 12.600v2M16.600 12.600v2M17.600 12.600v2" stroke="#777" stroke-width=".5"/><rect x="12.600" y="17" width="6.400" height="4.800" fill="#9a9a9a"/><path d="M12.600 18.600h6.400M12.600 20.200h6.400" stroke="#fff" stroke-width=".5"/></g><g transform="scale(1 1)"><rect x="12.800" y="11.800" width="5.800" height="3.600" fill="none" stroke="#8a8a8a" stroke-width=".6"/><path d="M13.800 12.600v2M15.200 12.600v2M16.600 12.600v2M17.600 12.600v2" stroke="#777" stroke-width=".5"/><rect x="12.600" y="17" width="6.400" height="4.800" fill="#9a9a9a"/><path d="M12.600 18.600h6.400M12.600 20.200h6.400" stroke="#fff" stroke-width=".5"/></g></g></svg>
<div class="b" style="left:1189px;top:105px;width:411px;height:739px;background:#f5f5f5;border-left:1px solid #e0e0e0;"></div>
<div class="b" style="left:1190px;top:174px;width:410px;height:1px;background:#e0e0e0;"></div>
<span class="t" style="left:1212.12px;top:135.00px;font-size:17.6px;color:#242424;font-weight:700;letter-spacing:0.247px;">Participantes</span>
<div class="b" style="left:1212.8px;top:193.8px;width:366.2px;height:36.4px;background:#fff;border-radius:5px;border-bottom:1.500px solid #686cc9;"></div>
<span class="t" style="left:1226.54px;top:205.00px;font-size:15.3px;color:#616161;letter-spacing:0.314px;">Escribe un nombre</span>
<div class="b" style="left:1213.3px;top:242.3px;width:365.4px;height:34.6px;background:#fff;border:1px solid #d1d1d1;border-radius:4px;"></div>
<span class="t" style="left:1335.82px;top:254.00px;font-size:14.2px;color:#2b2b2b;font-weight:700;letter-spacing:0.589px;">Compartir invitación</span>
<span class="t" style="left:1220.91px;top:300.00px;font-size:13.3px;color:#424242;letter-spacing:0.100px;">En esta reunión (7)</span>
<div class="b" style="left:1436.7px;top:291.8px;width:123.7px;height:27px;background:#fff;border:1px solid #d1d1d1;border-radius:4px;"></div>
<span class="t" style="left:1448.06px;top:299.00px;font-size:14px;color:#242424;letter-spacing:-0.179px;">Silenciar a todos</span>
<div class="b" style="left:1214.3px;top:336.5px;width:36px;height:36px;background:#ebdad5;border-radius:50%;"></div>
<span class="t" style="left:1222.92px;top:349.00px;font-size:13.2px;color:#4f2d22;-webkit-text-stroke:0.350px #4f2d22;transform:scaleX(1.057);transform-origin:0.03px 50%;">AR</span>
<span class="t" style="left:1264.47px;top:348.00px;font-size:15.2px;color:#424242;letter-spacing:0.074px;">Angeles Trujillo Reyes</span>
<div class="b" style="left:1214.3px;top:391.9px;width:36px;height:36px;background:#ebdad5;border-radius:50%;"></div>
<span class="t" style="left:1222.38px;top:404.00px;font-size:13.2px;color:#4f2d22;-webkit-text-stroke:0.350px #4f2d22;transform:scaleX(1.049);transform-origin:0.67px 50%;">CA</span>
<span class="t" style="left:1263.73px;top:403.00px;font-size:15.2px;color:#424242;letter-spacing:0.183px;">Carlos Leonel Burgos Arcos</span>
<div class="b" style="left:1214.3px;top:446.9px;width:36px;height:36px;background:#edd3e4;border-radius:50%;"></div>
<span class="t" style="left:1223.73px;top:459.00px;font-size:13.2px;color:#5a1a3c;-webkit-text-stroke:0.350px #5a1a3c;transform:scaleX(1.216);transform-origin:1.22px 50%;">IO</span>
<span class="t" style="left:1263.48px;top:458.00px;font-size:15.2px;color:#424242;letter-spacing:0.517px;">ignacio lagos ortiz</span>
<div class="b" style="left:1214.3px;top:502px;width:36px;height:36px;background:#cddcf0;border-radius:50%;"></div>
<span class="t" style="left:1223.79px;top:514.00px;font-size:13.2px;color:#1b3560;-webkit-text-stroke:0.350px #1b3560;transform:scaleX(1.059);transform-origin:0.21px 50%;">JG</span>
<span class="t" style="left:1264.87px;top:503.00px;font-size:15.2px;color:#424242;letter-spacing:0.155px;">javier galaz (Unverified)</span>
<span class="t" style="left:1263.27px;top:525.00px;font-size:13.3px;color:#616161;letter-spacing:0.377px;">Invitado de la reunión</span>
<div class="b" style="left:1209px;top:551.6px;width:46px;height:46px;border:1.500px solid #6366c9;border-radius:50%;background:#f8f8f8;"></div>
<div class="b" style="left:1214.3px;top:556.6px;width:36px;height:36px;background:#cfead9;border-radius:50%;"></div>
<span class="t" style="left:1224.14px;top:569.00px;font-size:13.2px;color:#1f5c3a;-webkit-text-stroke:0.350px #1f5c3a;transform:scaleX(1.031);transform-origin:0.21px 50%;">JC</span>
<span class="t" style="left:1264.27px;top:559.00px;font-size:14.8px;color:#242424;letter-spacing:0.631px;-webkit-text-stroke:0.400px #242424;">Juan Cubero</span>
<span class="t" style="left:1263.87px;top:579.00px;font-size:13.3px;color:#616161;letter-spacing:0.276px;">Organizador</span>
<div class="b" style="left:1214.3px;top:611.7px;width:36px;height:36px;background:#cddcf0;border-radius:50%;"></div>
<span class="t" style="left:1222.77px;top:624.00px;font-size:13.2px;color:#1b3560;-webkit-text-stroke:0.350px #1b3560;transform:scaleX(1.092);transform-origin:1.08px 50%;">KT</span>
<span class="t" style="left:1263.48px;top:623.00px;font-size:15.2px;color:#424242;letter-spacing:0.442px;">kayla tobar</span>
<div class="b" style="left:1214.3px;top:666.8px;width:36px;height:36px;background:#dcd7ee;border-radius:50%;"></div>
<span class="t" style="left:1219.32px;top:679.00px;font-size:13.2px;color:#29245f;-webkit-text-stroke:0.350px #29245f;transform:scaleX(1.265);transform-origin:1.08px 50%;">MD</span>
<span class="t" style="left:1263.25px;top:678.00px;font-size:15.2px;color:#424242;letter-spacing:0.406px;">Maxim La Marche Durán</span>
<div class="b" style="left:1214.3px;top:765.5px;width:36px;height:36px;background:#cddcf0;border-radius:50%;"></div>
<span class="t" style="left:1223.90px;top:778.00px;font-size:13.2px;color:#1b3560;letter-spacing:-0.803px;-webkit-text-stroke:0.350px #1b3560;">SS</span>
<span class="t" style="left:1263.81px;top:776.00px;font-size:15.2px;color:#424242;letter-spacing:0.270px;">Santi Smythe</span>
<span class="t" style="left:1221.20px;top:729.00px;font-size:13.3px;color:#424242;letter-spacing:0.053px;">Se agregaron las personas al chat (6)</span>
<span class="t" style="left:1264.28px;top:830.00px;font-size:15.2px;color:#424242;letter-spacing:0.551px;">fernanda pinto</span>
<svg class="b" style="left:0px;top:0px;" width="1600" height="844" viewBox="0 0 1600 844"><path d="M1554.200 135.200l13.200 12.800M1567.400 135.200l-13.200 12.800" fill="none" stroke="#424242" stroke-width="1.300" stroke-linecap="round" stroke-linejoin="round"/><circle cx="1553.200" cy="210.800" r="5.400" fill="none" stroke="#424242" stroke-width="1.300" stroke-linecap="round" stroke-linejoin="round" stroke-width="1.500"/><path d="M1557.200 214.800l5 5" fill="none" stroke="#424242" stroke-width="1.300" stroke-linecap="round" stroke-linejoin="round" stroke-width="1.700"/><path d="M1317.600 254.800h-3.600a3 3 0 0 0-3 3v6.600a3 3 0 0 0 3 3h7.400a3 3 0 0 0 3-3v-.8" fill="none" stroke="#424242" stroke-width="1.300" stroke-linecap="round" stroke-linejoin="round" stroke="#242424"/><path d="M1320.600 253.200l5.800 5.200-5.800 5.200v-3.100c-3.200 0-5.200 1-6.800 3.300.3-4.300 2.600-7.100 6.800-7.600z" fill="none" stroke="#424242" stroke-width="1.300" stroke-linecap="round" stroke-linejoin="round" stroke="#242424"/><path d="M1202 304.200l4 4 4-4" fill="none" stroke="#424242" stroke-width="1.300" stroke-linecap="round" stroke-linejoin="round" stroke-width="1.100"/><g transform="translate(1551.500 354.9)"><path d="M-2.900 -6.100a2.900 2.900 0 0 1 5.800 0v6.200a2.900 2.900 0 0 1-5.800 0zM-6.100 -.700v.2a6.100 6.100 0 0 0 12.200 0v-.2M0 5.700v3.200M-9.400 -8.600L9.100 9.200" fill="none" stroke="#383838" stroke-width="1.200" stroke-linecap="round" stroke-linejoin="round"/></g><g transform="translate(1551.500 410.29999999999995)"><path d="M-2.900 -6.100a2.900 2.900 0 0 1 5.800 0v6.200a2.900 2.900 0 0 1-5.800 0zM-6.100 -.700v.2a6.100 6.100 0 0 0 12.200 0v-.2M0 5.700v3.200M-9.400 -8.600L9.100 9.200" fill="none" stroke="#383838" stroke-width="1.200" stroke-linecap="round" stroke-linejoin="round"/></g><g transform="translate(1551.500 465.29999999999995)"><path d="M-2.900 -6.100a2.900 2.900 0 0 1 5.800 0v6.200a2.900 2.900 0 0 1-5.800 0zM-6.100 -.700v.2a6.100 6.100 0 0 0 12.200 0v-.2M0 5.700v3.200M-9.400 -8.600L9.100 9.200" fill="none" stroke="#383838" stroke-width="1.200" stroke-linecap="round" stroke-linejoin="round"/></g><g transform="translate(1551.500 520.4)"><path d="M-2.900 -6.100a2.900 2.900 0 0 1 5.800 0v6.200a2.900 2.900 0 0 1-5.800 0zM-6.100 -.700v.2a6.100 6.100 0 0 0 12.200 0v-.2M0 5.700v3.200M-9.400 -8.600L9.100 9.200" fill="none" stroke="#383838" stroke-width="1.200" stroke-linecap="round" stroke-linejoin="round"/></g><g transform="translate(1551.500 574.6)"><rect x="-3.400" y="-9" width="6.800" height="12" rx="3.400" fill="#242424"/><path d="M-5.600 -0.500a5.600 5.600 0 0 0 11.200 0M0 5.200v3.400" fill="none" stroke="#242424" stroke-width="1.300" stroke-linecap="round"/></g><g transform="translate(1551.500 630.1)"><path d="M-2.900 -6.100a2.900 2.900 0 0 1 5.800 0v6.200a2.900 2.900 0 0 1-5.800 0zM-6.100 -.700v.2a6.100 6.100 0 0 0 12.200 0v-.2M0 5.700v3.200M-9.400 -8.600L9.100 9.200" fill="none" stroke="#383838" stroke-width="1.200" stroke-linecap="round" stroke-linejoin="round"/></g><g transform="translate(1551.500 685.1999999999999)"><path d="M-2.900 -6.100a2.900 2.900 0 0 1 5.800 0v6.200a2.900 2.900 0 0 1-5.800 0zM-6.100 -.700v.2a6.100 6.100 0 0 0 12.200 0v-.2M0 5.700v3.200M-9.400 -8.600L9.100 9.200" fill="none" stroke="#383838" stroke-width="1.200" stroke-linecap="round" stroke-linejoin="round"/></g><path d="M1202 732.600l4 4 4-4" fill="none" stroke="#424242" stroke-width="1.300" stroke-linecap="round" stroke-linejoin="round" stroke-width="1.100"/><circle cx="1244.800" cy="795.800" r="6.200" fill="#f5f5f5"/><circle cx="1244.800" cy="795.800" r="4.600" fill="#fff" stroke="#424242" stroke-width="1"/><path d="M1243 794l3.600 3.600M1246.600 794l-3.600 3.600" stroke="#424242" stroke-width="1" stroke-linecap="round"/><defs><clipPath id="cf"><circle cx="1232.300" cy="839" r="18"/></clipPath><filter id="blf"><feGaussianBlur stdDeviation="0.900"/></filter></defs><g clip-path="url(#cf)"><g filter="url(#blf)"><rect x="1212" y="819" width="42" height="30" fill="#e9ebe6"/><path d="M1222 844c0-12 4-19 10-19s10 7 10 19z" fill="#4a3a2c"/><ellipse cx="1232" cy="834" rx="5" ry="6" fill="#b58a6e"/><rect x="1212" y="840" width="42" height="10" fill="#2f6a3a"/></g></g></svg>
</body></html>
